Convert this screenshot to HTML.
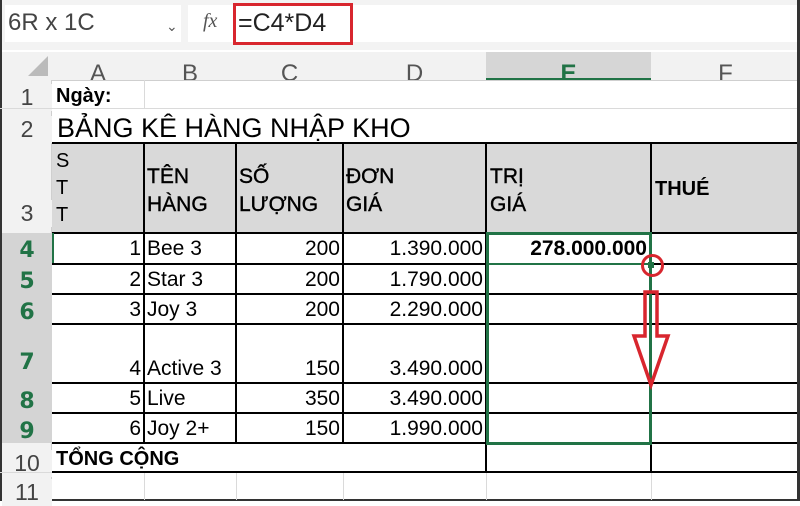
<!DOCTYPE html>
<html><head><meta charset="utf-8"><style>
*{margin:0;padding:0;box-sizing:border-box}
body{width:800px;height:501px;background:#fff;position:relative;overflow:hidden;font-family:"Liberation Sans",Arial,sans-serif;color:#000}
div{position:absolute}
.t{white-space:nowrap}
.rh{left:2px;width:50px;text-align:center;color:#444;font-size:23px;background:#f2f2f2}
.sel{background:#d4d4d4;color:#217346;font-weight:bold;font-family:"DejaVu Sans",sans-serif;font-size:22px}
.ch{top:52px;height:28px;background:#f2f2f2;color:#555;font-size:24px;text-align:center;line-height:44px;overflow:hidden}
.vl{width:2px;background:#000}
.hl{height:2px;background:#000}
.gv{width:1px;background:#dadada}
.gh{height:1px;background:#dadada}
.c{font-size:21px;line-height:22px}
.r{text-align:right}
</style></head><body>
<!-- formula bar -->
<div style="left:0;top:0;width:800px;height:50px;background:#f3f3f3"></div>
<div style="left:5px;top:5px;width:176px;height:37px;background:#fff"></div>
<div class="t" style="left:8px;top:9px;font-size:24px;color:#444">6R x 1C</div>
<div class="t" style="left:166px;top:18px;font-size:14px;color:#555">⌄</div>
<div style="left:188px;top:5px;width:44px;height:37px;background:#fff"></div>
<div class="t" style="left:203px;top:10px;font-size:20px;color:#555;font-family:'Liberation Serif',serif;font-style:italic">fx</div>
<div style="left:232px;top:5px;width:568px;height:37px;background:#fff"></div>
<div style="left:233px;top:3px;width:120px;height:42px;border:3px solid #d8262e"></div>
<div class="t" style="left:238px;top:9px;font-size:25px;color:#222">=C4*D4</div>
<!-- col headers -->
<div class="ch" style="left:0;width:52px"></div>
<div style="left:28px;top:56px;width:0;height:0;border-left:20px solid transparent;border-bottom:20px solid #bbb"></div>
<div class="ch" style="left:52px;width:92px">A</div>
<div class="ch" style="left:144px;width:92px">B</div>
<div class="ch" style="left:236px;width:107px">C</div>
<div class="ch" style="left:343px;width:143px">D</div>
<div class="ch" style="left:486px;width:165px;background:#d6d6d6;color:#217346;font-weight:bold">E</div>
<div style="left:486px;top:78px;width:165px;height:2px;background:#217346"></div>
<div class="ch" style="left:651px;width:149px">F</div>
<div style="left:0;top:80px;width:800px;height:1px;background:#cfcfcf"></div>
<!-- row header bg -->
<div style="left:0;top:80px;width:52px;height:421px;background:#f2f2f2"></div>
<div style="left:0;top:0;width:2px;height:501px;background:#333"></div>
<div style="left:797px;top:0;width:3px;height:501px;background:#333"></div>
<div style="left:0;top:499px;width:800px;height:2px;background:#333"></div>
<div style="left:51px;top:80px;width:1px;height:421px;background:#cfcfcf"></div>
<!-- row numbers -->
<div class="rh" style="top:84px">1</div>
<div class="rh" style="top:116px">2</div>
<div class="rh" style="top:200px">3</div>
<div class="rh sel" style="top:233px;height:91px"></div>
<div class="rh sel" style="top:324px;height:119px"></div>
<div class="rh sel t" style="top:238px;background:none">4</div>
<div class="rh sel t" style="top:269px;background:none">5</div>
<div class="rh sel t" style="top:300px;background:none">6</div>
<div class="rh sel t" style="top:350px;background:none">7</div>
<div class="rh sel t" style="top:389px;background:none">8</div>
<div class="rh sel t" style="top:419px;background:none">9</div>
<div class="rh" style="top:450px">10</div>
<div class="rh" style="top:479px">11</div>
<!-- gridlines light -->
<div class="gh" style="left:0;top:108px;width:797px"></div>
<div class="gh" style="left:0;top:472px;width:797px"></div>
<div class="gv" style="left:144px;top:80px;height:28px"></div>
<div class="gv" style="left:144px;top:472px;height:28px"></div>
<div class="gv" style="left:236px;top:472px;height:28px"></div>
<div class="gv" style="left:343px;top:472px;height:28px"></div>
<div class="gv" style="left:486px;top:472px;height:28px"></div>
<div class="gv" style="left:651px;top:472px;height:28px"></div>
<!-- header row gray -->
<div style="left:52px;top:143px;width:745px;height:90px;background:#d9d9d9"></div>
<!-- thick lines -->
<div class="hl" style="left:52px;top:142px;width:745px"></div>
<div class="hl" style="left:52px;top:232px;width:745px"></div>
<div class="hl" style="left:52px;top:263px;width:745px"></div>
<div class="hl" style="left:52px;top:293px;width:745px"></div>
<div class="hl" style="left:52px;top:323px;width:745px"></div>
<div class="hl" style="left:52px;top:382px;width:745px"></div>
<div class="hl" style="left:52px;top:412px;width:745px"></div>
<div class="hl" style="left:52px;top:442px;width:745px"></div>
<div class="hl" style="left:52px;top:471px;width:745px"></div>
<div class="vl" style="left:143px;top:142px;height:301px"></div>
<div class="vl" style="left:235px;top:142px;height:301px"></div>
<div class="vl" style="left:342px;top:142px;height:301px"></div>
<div class="vl" style="left:485px;top:142px;height:330px"></div>
<div class="vl" style="left:650px;top:142px;height:330px"></div>
<div style="left:52px;top:233px;width:2px;height:30px;background:#217346"></div>
<!-- texts -->
<div class="t c" style="left:56px;top:85px;font-weight:bold;font-size:20px">Ngày:</div>
<div class="t" style="left:57px;top:113px;font-size:27px">BẢNG KÊ HÀNG NHẬP KHO</div>
<div class="c" style="left:56px;top:148px;font-size:20px;line-height:27px">S<br>T<br>T</div>
<div class="t c" style="left:147px;top:163px;line-height:28px;-webkit-text-stroke:0.4px #000">TÊN<br>HÀNG</div>
<div class="t c" style="left:239px;top:163px;line-height:28px;-webkit-text-stroke:0.4px #000">SỐ<br>LƯỢNG</div>
<div class="t c" style="left:346px;top:163px;line-height:28px;-webkit-text-stroke:0.4px #000">ĐƠN<br>GIÁ</div>
<div class="t c" style="left:490px;top:163px;line-height:28px;-webkit-text-stroke:0.4px #000">TRỊ<br>GIÁ</div>
<div class="t c" style="left:655px;top:178px;font-weight:bold;font-size:20px">THUÉ</div>
<!-- data rows -->
<div class="c r" style="left:52px;width:89px;top:238px">1</div>
<div class="c r" style="left:52px;width:89px;top:269px">2</div>
<div class="c r" style="left:52px;width:89px;top:299px">3</div>
<div class="c r" style="left:52px;width:89px;top:358px">4</div>
<div class="c r" style="left:52px;width:89px;top:388px">5</div>
<div class="c r" style="left:52px;width:89px;top:418px">6</div>
<div class="t c" style="left:147px;top:238px">Bee 3</div>
<div class="t c" style="left:147px;top:269px">Star 3</div>
<div class="t c" style="left:147px;top:299px">Joy 3</div>
<div class="t c" style="left:147px;top:358px">Active 3</div>
<div class="t c" style="left:147px;top:388px">Live</div>
<div class="t c" style="left:147px;top:418px">Joy 2+</div>
<div class="c r" style="left:236px;width:104px;top:238px">200</div>
<div class="c r" style="left:236px;width:104px;top:269px">200</div>
<div class="c r" style="left:236px;width:104px;top:299px">200</div>
<div class="c r" style="left:236px;width:104px;top:358px">150</div>
<div class="c r" style="left:236px;width:104px;top:388px">350</div>
<div class="c r" style="left:236px;width:104px;top:418px">150</div>
<div class="c r" style="left:343px;width:140px;top:238px">1.390.000</div>
<div class="c r" style="left:343px;width:140px;top:269px">1.790.000</div>
<div class="c r" style="left:343px;width:140px;top:299px">2.290.000</div>
<div class="c r" style="left:343px;width:140px;top:358px">3.490.000</div>
<div class="c r" style="left:343px;width:140px;top:388px">3.490.000</div>
<div class="c r" style="left:343px;width:140px;top:418px">1.990.000</div>
<div class="t c" style="left:56px;top:448px;font-weight:bold;font-size:20px">TỔNG CỘNG</div>
<!-- selection -->
<div style="left:486px;top:232px;width:166px;height:33px;background:#fff"></div>
<div class="c r" style="left:486px;width:161px;top:238px;font-weight:bold;font-size:21px">278.000.000</div>
<div style="left:486px;top:232px;width:166px;height:213px;border:3px solid #217346"></div>
<div style="left:486px;top:263px;width:166px;height:2px;background:#217346"></div>
<div style="left:648px;top:262px;width:6px;height:6px;background:#217346"></div>
<!-- red circle & arrow -->
<div style="left:641px;top:254px;width:23px;height:23px;border:3px solid #d8262e;border-radius:50%"></div>
<svg style="position:absolute;left:630px;top:290px" width="42" height="100" viewBox="0 0 42 100">
<path d="M15 2 H27 V46 H38 L21 95 L4 46 H15 Z" fill="none" stroke="#d8262e" stroke-width="3.5" stroke-linejoin="miter"/>
</svg>
</body></html>
